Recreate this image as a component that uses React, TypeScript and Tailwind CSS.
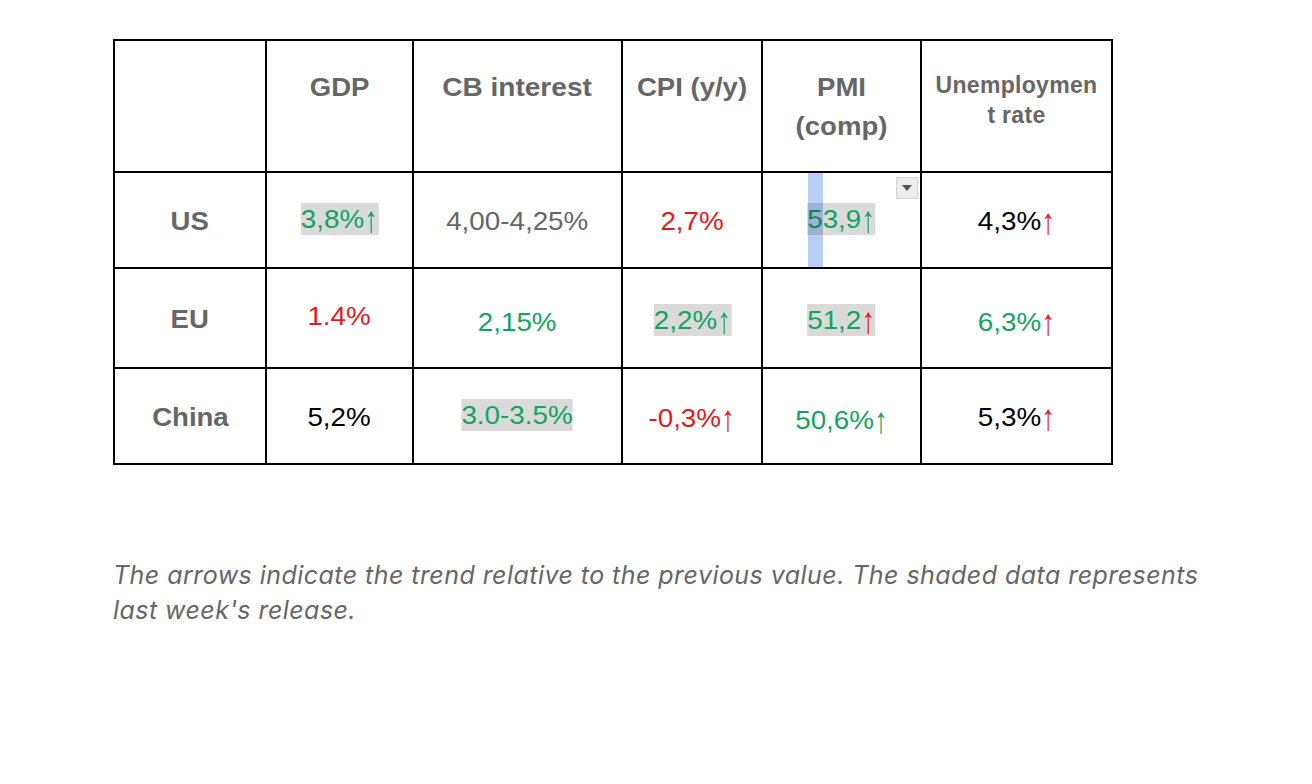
import React from 'react';

type Tone = 'green' | 'red' | 'black' | 'gray';

type Value = {
  text: string;
  tone: Tone;
  arrow?: 'green' | 'red';
  shaded?: boolean;
  nudge?: number;
};

const TONE: Record<Tone, string> = {
  green: 'text-[#12a55c]',
  red: 'text-[#e3191c]',
  black: 'text-black',
  gray: 'text-[#666666]',
};

const ROWS: { label: string; height: string; values: Value[] }[] = [
  {
    label: 'US',
    height: 'h-[96px]',
    values: [
      { text: '3,8%', tone: 'green', arrow: 'green', shaded: true, nudge: -1 },
      { text: '4,00-4,25%', tone: 'gray', nudge: 1 },
      { text: '2,7%', tone: 'red', nudge: 1 },
      { text: '53,9', tone: 'green', arrow: 'green', shaded: true, nudge: -1 },
      { text: '4,3%', tone: 'black', arrow: 'red', nudge: 1 },
    ],
  },
  {
    label: 'EU',
    height: 'h-[100px]',
    values: [
      { text: '1.4%', tone: 'red', nudge: -2 },
      { text: '2,15%', tone: 'green', nudge: 4 },
      { text: '2,2%', tone: 'green', arrow: 'green', shaded: true, nudge: 2 },
      { text: '51,2', tone: 'green', arrow: 'red', shaded: true, nudge: 2 },
      { text: '6,3%', tone: 'green', arrow: 'red', nudge: 4 },
    ],
  },
  {
    label: 'China',
    height: 'h-[96px]',
    values: [
      { text: '5,2%', tone: 'black', nudge: 1 },
      { text: '3.0-3.5%', tone: 'green', shaded: true, nudge: -1 },
      { text: '-0,3%', tone: 'red', arrow: 'red', nudge: 2 },
      { text: '50,6%', tone: 'green', arrow: 'green', nudge: 4 },
      { text: '5,3%', tone: 'black', arrow: 'red', nudge: 1 },
    ],
  },
];

const cellClass = 'border-2 border-black text-center align-middle p-0';
const headBase = 'border-2 border-black text-center align-top px-1 font-bold text-[#666666]';
const headClass = `${headBase} pt-[27px] text-[25.5px] leading-[39px]`;

function Arrow({ tone }: { tone: 'green' | 'red' }) {
  return (
    <span
      className={`inline-block origin-center scale-y-[1.45] ${tone === 'green' ? 'text-[#12a55c]' : 'text-[#e3191c]'}`}
    >
      ↑
    </span>
  );
}

function ValueText({ value }: { value: Value }) {
  return (
    <span
      className={`relative inline-block scale-x-[1.09] ${TONE[value.tone]} ${value.shaded ? 'bg-[#dadada]' : ''} text-[25.5px] leading-[32px]`}
      style={value.nudge ? { top: value.nudge } : undefined}
    >
      {value.text}
      {value.arrow && <Arrow tone={value.arrow} />}
    </span>
  );
}

export default function App() {
  return (
    <div className="min-h-[784px] bg-white pt-[39px] pl-[113px]" style={{ fontFamily: '"Liberation Sans", Arial, sans-serif' }}>
      <table className="table-fixed border-collapse w-[998px]">
        <colgroup>
          <col className="w-[152px]" />
          <col className="w-[147px]" />
          <col className="w-[209px]" />
          <col className="w-[140px]" />
          <col className="w-[159px]" />
          <col className="w-[191px]" />
        </colgroup>
        <thead>
          <tr className="h-[132px]">
            <th className={headClass}></th>
            <th className={headClass}>
              <span className="inline-block scale-x-[1.08]">GDP</span>
            </th>
            <th className={headClass}>
              <span className="inline-block scale-x-[1.1]">CB interest</span>
            </th>
            <th className={headClass}>
              <span className="inline-block scale-x-[1.08]">CPI (y/y)</span>
            </th>
            <th className={headClass}>
              <span className="inline-block scale-x-[1.08]">
                PMI
                <br />
                (comp)
              </span>
            </th>
            <th className={`${headBase} pt-[29px] text-[23px] leading-[30px] tracking-[0.3px]`}>
              Unemploymen
              <br />t rate
            </th>
          </tr>
        </thead>
        <tbody>
          {ROWS.map((row, ri) => (
            <tr key={row.label} className={row.height}>
              <td className={`${cellClass} font-bold text-[#666666] text-[25.5px]`}>
                <span className="relative top-[1px] inline-block scale-x-[1.08]">{row.label}</span>
              </td>
              {row.values.map((v, vi) => (
                <td key={vi} className={`${cellClass} ${ri === 0 && vi === 3 ? 'relative' : ''}`}>
                  {ri === 0 && vi === 3 && (
                    <>
                      <div className="absolute left-[45px] top-0 bottom-0 w-[15px] bg-[#b7cff7] mix-blend-multiply pointer-events-none z-10" />
                      <div className="absolute left-[133px] top-[4px] w-[22px] h-[22px] bg-[#ededed] border border-[#d4d4d4] flex items-center justify-center">
                        <svg width="10" height="6" viewBox="0 0 10 6">
                          <path d="M0 0 L10 0 L5 6 Z" fill="#555555" />
                        </svg>
                      </div>
                    </>
                  )}
                  <ValueText value={v} />
                </td>
              ))}
            </tr>
          ))}
        </tbody>
      </table>

      <p
        className="mt-[93px] w-[1110px] italic text-[#666666] text-[25px] leading-[35px] tracking-[0.45px]"
        style={{ fontFamily: 'Inter, "Noto Sans", sans-serif' }}
      >
        The arrows indicate the trend relative to the previous value. The shaded data represents last week's release.
      </p>
    </div>
  );
}
